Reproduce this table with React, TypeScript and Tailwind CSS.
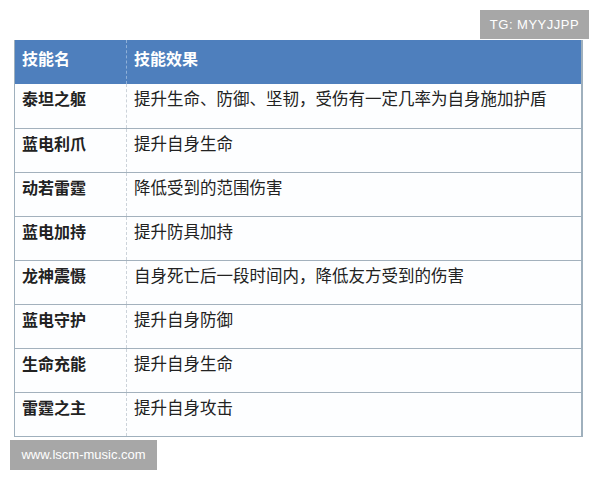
const rows: [string, string][] = [
  ["泰坦之躯", "提升生命、防御、坚韧，受伤有一定几率为自身施加护盾"],
  ["蓝电利爪", "提升自身生命"],
  ["动若雷霆", "降低受到的范围伤害"],
  ["蓝电加持", "提升防具加持"],
  ["龙神震慑", "自身死亡后一段时间内，降低友方受到的伤害"],
  ["蓝电守护", "提升自身防御"],
  ["生命充能", "提升自身生命"],
  ["雷霆之主", "提升自身攻击"],
];

const cjk = "font-['Microsoft_YaHei','Noto_Sans_CJK_SC',sans-serif]";

export default function App() {
  return (
    <div className="relative w-[600px] h-[480px] bg-white overflow-hidden">
      {/* watermark top */}
      <div className="absolute left-[480px] top-[10px] w-[109px] h-[29px] bg-[#a7a7a7] flex items-center justify-center text-white text-[13px] tracking-[0.5px] font-['Liberation_Sans',sans-serif]">
        TG: MYYJJPP
      </div>

      <div className={`ml-[14px] mt-[40px] w-[569px] border-x border-b border-[#9fb0bd] border-r-2 ${cjk}`}>
        <div className="flex h-[44px] bg-[#4e7fbd] text-white font-bold text-[16px]">
          <div className="w-[112px] pl-[7px] pt-[6px] border-r border-dashed border-[#8fb0d8]">技能名</div>
          <div className="flex-1 pl-[7px] pt-[6px]">技能效果</div>
        </div>
        {rows.map(([name, desc], i) => (
          <div
            key={i}
            className={`flex h-[44px] bg-[#fdfeff] text-[#222] ${i > 0 ? "border-t border-[#a3b1bd]" : ""}`}
          >
            <div className="w-[112px] pl-[7px] pt-[2px] border-r border-dashed border-[#ccd3da] font-bold text-[16px] leading-[25px]">
              {name}
            </div>
            <div className="flex-1 pl-[7px] pt-[2px] text-[16.5px] leading-[25px]">{desc}</div>
          </div>
        ))}
      </div>

      {/* watermark bottom */}
      <div className="absolute left-[10px] top-[440px] w-[147px] h-[30px] bg-[#a7a7a7] flex items-center justify-center text-white text-[13px] font-['Liberation_Sans',sans-serif]">
        www.lscm-music.com
      </div>
    </div>
  );
}
